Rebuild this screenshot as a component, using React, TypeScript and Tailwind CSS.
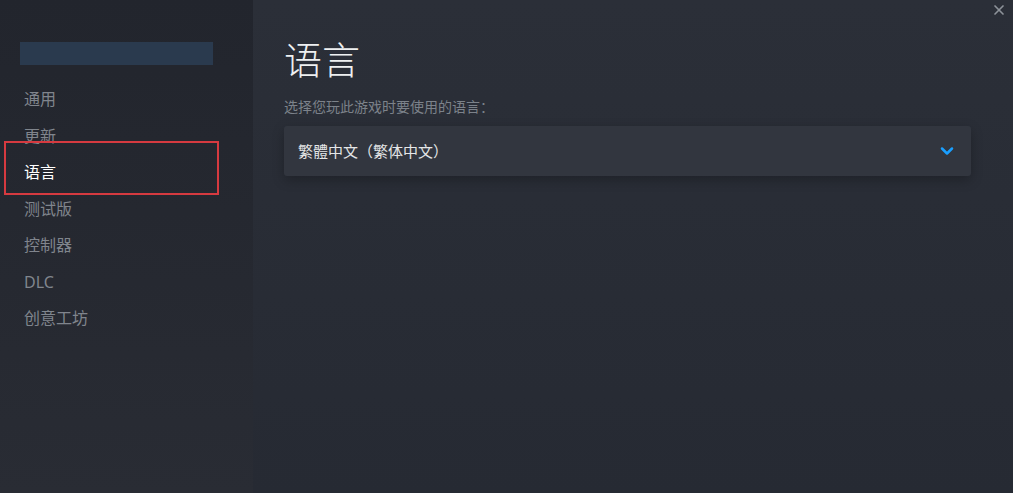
import { ChevronDown, X } from "lucide-react";

const font = { fontFamily: '"Noto Sans", "Noto Sans CJK SC", sans-serif' };

const navItems = [
  { label: "通用" },
  { label: "更新" },
  { label: "语言", active: true },
  { label: "测试版" },
  { label: "控制器" },
  { label: "DLC" },
  { label: "创意工坊" },
];

export default function App() {
  return (
    <div className="flex h-[493px] w-[1013px] overflow-hidden bg-[#272b33] text-[#dcdedf]" style={font}>
      <aside className="flex w-[253px] shrink-0 flex-col bg-gradient-to-b from-[#22252d] to-[#292c34] pt-[42px]">
        <div className="mx-[20px] h-[23px] w-[193px] bg-[#2a3a4e]" />
        <nav className="mt-[16px] flex flex-col">
          {navItems.map((item) => (
            <div
              key={item.label}
              className={
                item.active
                  ? "relative flex h-[36.5px] items-center pl-[24px] text-[16px] text-white"
                  : "flex h-[36.5px] items-center pl-[24px] text-[16px] text-[#80858d]"
              }
            >
              {item.active && (
                <div className="absolute -bottom-[4px] -top-[13px] left-[4px] w-[215px] border-2 border-[#d63a40]" />
              )}
              {item.label}
            </div>
          ))}
        </nav>
      </aside>

      <main className="relative flex-1 bg-gradient-to-b from-[#2b2f38] to-[#262a33] pl-[31px] pr-[42px] pt-[35px]">
        <button className="absolute right-[6px] top-[2px] text-[#8d9299]">
          <X className="h-[16px] w-[16px]" strokeWidth={2.5} />
        </button>
        <h1 className="text-[38px] font-light leading-[48px] text-[#eef0f1]">语言</h1>
        <p className="mt-[15px] text-[14px] leading-[18px] text-[#7c828a]">选择您玩此游戏时要使用的语言：</p>
        <div className="mt-[10px] flex h-[50px] items-center justify-between rounded-[3px] bg-[#32363f] pl-[14px] pr-[14px] shadow-[0_4px_12px_rgba(0,0,0,0.25)]">
          <span className="text-[15px] text-[#e4e6e7]">繁體中文（繁体中文）</span>
          <ChevronDown className="h-[20px] w-[20px] text-[#1a9fff]" strokeWidth={3} />
        </div>
      </main>
    </div>
  );
}
